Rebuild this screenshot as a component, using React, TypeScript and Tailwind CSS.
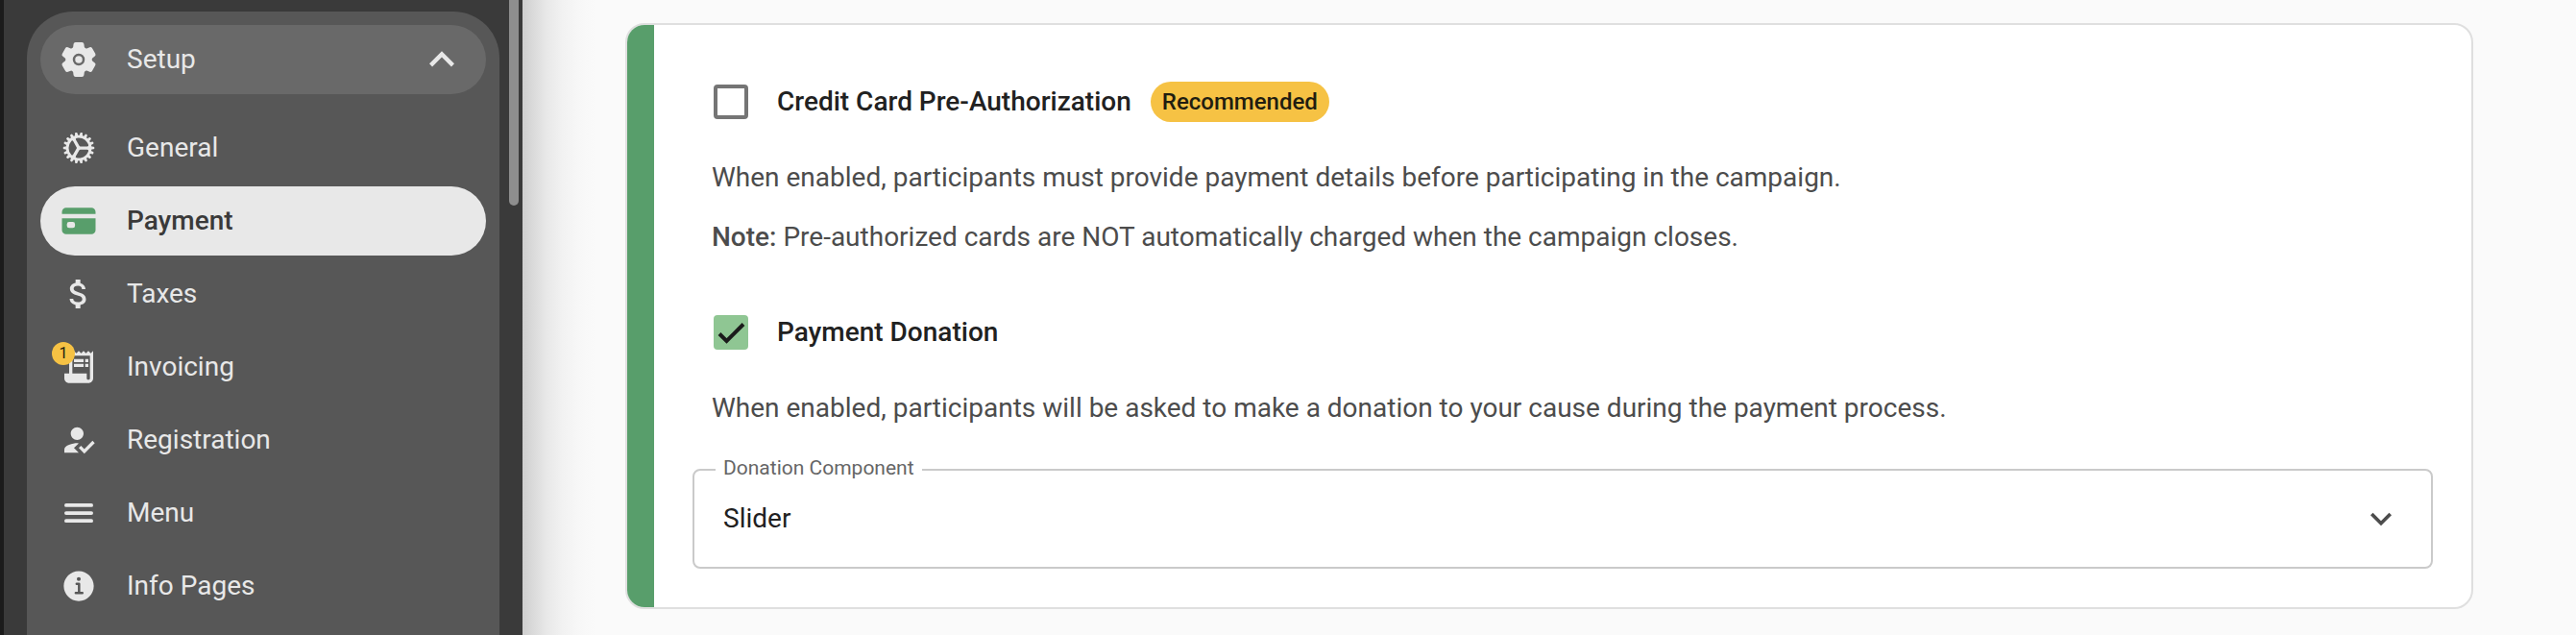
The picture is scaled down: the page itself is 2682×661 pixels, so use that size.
import type { ComponentType } from "react";
import { IoCard, IoCog, IoInformationCircle, IoMenu, IoSettings } from "react-icons/io5";
import { MdAttachMoney, MdExpandLess, MdExpandMore, MdHowToReg, MdReceiptLong } from "react-icons/md";

type NavItem = {
  label: string;
  icon: ComponentType<{ className?: string }>;
  active?: boolean;
  badge?: number;
};

const items: NavItem[] = [
  { label: "General", icon: IoCog },
  { label: "Payment", icon: IoCard, active: true },
  { label: "Taxes", icon: MdAttachMoney },
  { label: "Invoicing", icon: MdReceiptLong, badge: 1 },
  { label: "Registration", icon: MdHowToReg },
  { label: "Menu", icon: IoMenu },
  { label: "Info Pages", icon: IoInformationCircle },
];

function NavLink({ label, icon: Icon, active, badge }: NavItem) {
  return (
    <a
      href="#"
      aria-current={active ? "page" : undefined}
      className={
        active
          ? "flex h-[72px] items-center gap-[30px] rounded-full bg-[#e8e8e8] px-5 font-medium text-[#3a3a3a]"
          : "flex h-[72px] items-center gap-[30px] rounded-full px-5 text-[#e8e8e8]"
      }
    >
      <span className="relative">
        <Icon className={active ? "size-10 text-[#589e6b]" : "size-10"} />
        {badge !== undefined && (
          <span className="absolute -top-1.5 -left-2 flex size-6 items-center justify-center rounded-full bg-[#f6c244] text-base text-[#211d10]">
            {badge}
          </span>
        )}
      </span>
      {label}
    </a>
  );
}

function Option({ id, label, checked, badge }: { id: string; label: string; checked?: boolean; badge?: string }) {
  return (
    <div className="flex h-10 items-center pl-[22px]">
      <span className="grid">
        <input
          id={id}
          type="checkbox"
          defaultChecked={checked}
          className="peer col-start-1 row-start-1 size-9 appearance-none rounded-[4px] border-4 border-[#757575] checked:border-0 checked:bg-[#8fc693]"
        />
        <svg
          viewBox="0 0 36 36"
          className="pointer-events-none col-start-1 row-start-1 hidden size-9 peer-checked:block"
          fill="none"
          stroke="#1b1b1b"
          strokeWidth="4"
          aria-hidden="true"
        >
          <path d="M6 19.5 13.5 27 31 9.5" />
        </svg>
      </span>
      <label htmlFor={id} className="ml-[30px] font-medium text-[#212121]">
        {label}
      </label>
      {badge && (
        <span className="ml-5 flex h-[42px] items-center rounded-full bg-[#f6c244] px-3 text-2xl font-medium text-[#211d10]">
          {badge}
        </span>
      )}
    </div>
  );
}

export default function App() {
  return (
    <div className="flex min-h-screen bg-[#fafafa] font-[Roboto,sans-serif] text-[28px] leading-[42px]">
      <aside className="flex w-[544px] shrink-0 border-l-4 border-[#1b1b1b] bg-[#3a3a3a] pl-6">
        <nav className="mt-3 flex-1 rounded-t-[48px] bg-[#575757] px-3.5 pt-3.5">
          <button
            type="button"
            aria-expanded="true"
            className="flex h-[72px] w-full items-center gap-[30px] rounded-full bg-[#696969] px-5 text-[#e8e8e8]"
          >
            <IoSettings className="size-10" />
            <span className="flex-1 text-left">Setup</span>
            <MdExpandLess className="size-[52px]" />
          </button>
          <div className="mt-5 flex flex-col gap-1">
            {items.map((item) => (
              <NavLink key={item.label} {...item} />
            ))}
          </div>
        </nav>
        <div className="w-6 pr-1 pl-2.5">
          <div className="h-[214px] w-2.5 rounded-b-full bg-[#8e8e8e]" />
        </div>
      </aside>

      <main className="min-w-0 flex-1 bg-[linear-gradient(to_right,#cecece_0px,#d9d9d9_10px,#e8e8e8_25px,#f2f2f2_42px,#f7f7f7_58px,#fafafa_76px)] px-[107px] pt-6">
        <section className="flex overflow-hidden rounded-[20px] border-2 border-[#dfdfdf] bg-white">
          <div className="w-7 shrink-0 bg-[#589e6b]" />
          <div className="min-w-0 flex-1 px-10 pt-[60px] pb-10 text-[#4c4c4c]">
            <Option id="preauth" label="Credit Card Pre-Authorization" badge="Recommended" />
            <div className="mt-[38px] flex flex-col gap-5 pl-5">
              <p>When enabled, participants must provide payment details before participating in the campaign.</p>
              <p>
                <b className="font-medium">Note:</b> Pre-authorized cards are NOT automatically charged when the
                campaign closes.
              </p>
            </div>
            <div className="mt-[58px]">
              <Option id="donation" label="Payment Donation" checked />
            </div>
            <p className="mt-[38px] pl-5">
              When enabled, participants will be asked to make a donation to your cause during the payment process.
            </p>
            <div className="relative mt-[42px] grid h-[104px] items-center rounded-lg border-2 border-[#cacaca]">
              <label
                htmlFor="component"
                className="absolute -top-[15px] left-[22px] bg-white px-2 text-[21px] leading-6 text-[#666666]"
              >
                Donation Component
              </label>
              <select
                id="component"
                defaultValue="Slider"
                className="col-start-1 row-start-1 h-full w-full appearance-none rounded-lg pl-[30px] text-[#212121]"
              >
                <option>Slider</option>
              </select>
              <MdExpandMore className="pointer-events-none col-start-1 row-start-1 mr-[30px] size-11 justify-self-end" />
            </div>
          </div>
        </section>
      </main>
    </div>
  );
}
